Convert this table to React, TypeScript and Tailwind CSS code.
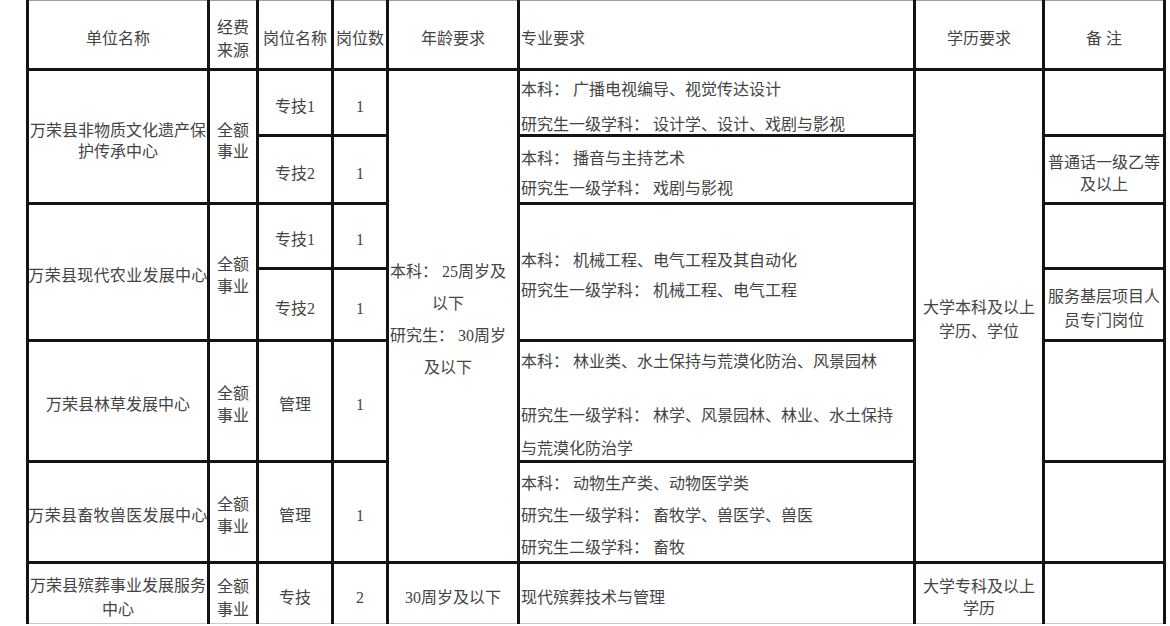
import React from "react";

const base =
  "bg-white flex flex-col items-center justify-center text-center pt-[8px] text-[16px] text-[#444444] font-['Liberation_Serif','Noto_Sans_CJK_SC',serif]";
const left =
  "bg-white flex flex-col items-start justify-center text-left pt-[8px] pl-[1px] text-[16px] text-[#444444] font-['Liberation_Serif','Noto_Sans_CJK_SC',serif] whitespace-nowrap";

function C({ cls, children }: { cls: string; children?: React.ReactNode }) {
  return <div className={`${base} ${cls}`}>{children}</div>;
}
function L({ cls, children }: { cls: string; children?: React.ReactNode }) {
  return <div className={`${left} ${cls}`}>{children}</div>;
}

export default function App() {
  return (
    <div className="w-[1170px] h-[626px] bg-white overflow-hidden">
      <div className="ml-[26px] w-fit bg-[#141414] px-[3px] grid grid-cols-[178px_46px_72px_52px_128px_393px_126px_118px] grid-rows-[68px_63px_65px_62px_69px_118px_98px_60px] gap-[3px]">
        {/* header */}
        <C cls="col-start-1 row-start-1 border-t border-[#a0a0a0]">单位名称</C>
        <C cls="col-start-2 row-start-1 border-t border-[#a0a0a0] leading-[23px] pt-[4px]">
          <span>经费</span>
          <span>来源</span>
        </C>
        <C cls="col-start-3 row-start-1 border-t border-[#a0a0a0] whitespace-nowrap">岗位名称</C>
        <C cls="col-start-4 row-start-1 border-t border-[#a0a0a0] whitespace-nowrap">岗位数</C>
        <C cls="col-start-5 row-start-1 border-t border-[#a0a0a0]">年龄要求</C>
        <L cls="col-start-6 row-start-1 border-t border-[#a0a0a0]">专业要求</L>
        <C cls="col-start-7 row-start-1 border-t border-[#a0a0a0]">学历要求</C>
        <C cls="col-start-8 row-start-1 border-t border-[#a0a0a0] whitespace-pre">备 注</C>

        {/* column 1 */}
        <C cls="col-start-1 row-start-2 row-span-2 leading-[21px]">万荣县非物质文化遗产保护传承中心</C>
        <C cls="col-start-1 row-start-4 row-span-2 whitespace-nowrap">
          <span className="tracking-[0.3px]">万荣县现代农业发展中心</span>
        </C>
        <C cls="col-start-1 row-start-6">万荣县林草发展中心</C>
        <C cls="col-start-1 row-start-7 whitespace-nowrap">
          <span className="tracking-[0.3px]">万荣县畜牧兽医发展中心</span>
        </C>
        <C cls="col-start-1 row-start-8 leading-[24px] border-b border-[#c8c8c8]">万荣县殡葬事业发展服务中心</C>

        {/* column 2 */}
        <C cls="col-start-2 row-start-2 row-span-2 leading-[21px]">
          <span>全额</span>
          <span>事业</span>
        </C>
        <C cls="col-start-2 row-start-4 row-span-2 leading-[22px]">
          <span>全额</span>
          <span>事业</span>
        </C>
        <C cls="col-start-2 row-start-6 leading-[22px]">
          <span>全额</span>
          <span>事业</span>
        </C>
        <C cls="col-start-2 row-start-7 leading-[22px]">
          <span>全额</span>
          <span>事业</span>
        </C>
        <C cls="col-start-2 row-start-8 leading-[23px] border-b border-[#c8c8c8]">
          <span>全额</span>
          <span>事业</span>
        </C>

        {/* column 3 */}
        <C cls="col-start-3 row-start-2">专技1</C>
        <C cls="col-start-3 row-start-3">专技2</C>
        <C cls="col-start-3 row-start-4">专技1</C>
        <C cls="col-start-3 row-start-5">专技2</C>
        <C cls="col-start-3 row-start-6">管理</C>
        <C cls="col-start-3 row-start-7">管理</C>
        <C cls="col-start-3 row-start-8 border-b border-[#c8c8c8]">专技</C>

        {/* column 4 */}
        <C cls="col-start-4 row-start-2">1</C>
        <C cls="col-start-4 row-start-3">1</C>
        <C cls="col-start-4 row-start-4">1</C>
        <C cls="col-start-4 row-start-5">1</C>
        <C cls="col-start-4 row-start-6">1</C>
        <C cls="col-start-4 row-start-7">1</C>
        <C cls="col-start-4 row-start-8 border-b border-[#c8c8c8]">2</C>

        {/* column 5 */}
        <C cls="col-start-5 row-start-2 row-span-6 leading-[32px] pr-[10px] whitespace-nowrap">
          <span>本科： 25周岁及</span>
          <span>以下</span>
          <span>研究生： 30周岁</span>
          <span>及以下</span>
        </C>
        <C cls="col-start-5 row-start-8 whitespace-nowrap border-b border-[#c8c8c8]">30周岁及以下</C>

        {/* column 6 */}
        <L cls="col-start-6 row-start-2 leading-[35px]">
          <span>本科： 广播电视编导、视觉传达设计</span>
          <span>研究生一级学科： 设计学、设计、戏剧与影视</span>
        </L>
        <L cls="col-start-6 row-start-3 leading-[30px]">
          <span>本科： 播音与主持艺术</span>
          <span>研究生一级学科： 戏剧与影视</span>
        </L>
        <L cls="col-start-6 row-start-4 row-span-2 leading-[30px]">
          <span>本科： 机械工程、电气工程及其自动化</span>
          <span>研究生一级学科： 机械工程、电气工程</span>
        </L>
        <L cls="col-start-6 row-start-6 leading-[30px]">
          <span>本科： 林业类、水土保持与荒漠化防治、风景园林</span>
          <span className="mt-[24px]">研究生一级学科： 林学、风景园林、林业、水土保持</span>
          <span className="mt-[3px]">与荒漠化防治学</span>
        </L>
        <L cls="col-start-6 row-start-7 leading-[32px]">
          <span>本科： 动物生产类、动物医学类</span>
          <span>研究生一级学科： 畜牧学、兽医学、兽医</span>
          <span>研究生二级学科： 畜牧</span>
        </L>
        <L cls="col-start-6 row-start-8 border-b border-[#c8c8c8]">现代殡葬技术与管理</L>

        {/* column 7 */}
        <C cls="col-start-7 row-start-2 row-span-6 leading-[24px] whitespace-nowrap">
          <span>大学本科及以上</span>
          <span>学历、学位</span>
        </C>
        <C cls="col-start-7 row-start-8 leading-[22px] whitespace-nowrap border-b border-[#c8c8c8]">
          <span>大学专科及以上</span>
          <span>学历</span>
        </C>

        {/* column 8 */}
        <C cls="col-start-8 row-start-2"></C>
        <C cls="col-start-8 row-start-3 leading-[22px] whitespace-nowrap">
          <span>普通话一级乙等</span>
          <span>及以上</span>
        </C>
        <C cls="col-start-8 row-start-4"></C>
        <C cls="col-start-8 row-start-5 leading-[24px] whitespace-nowrap">
          <span>服务基层项目人</span>
          <span>员专门岗位</span>
        </C>
        <C cls="col-start-8 row-start-6"></C>
        <C cls="col-start-8 row-start-7"></C>
        <C cls="col-start-8 row-start-8 border-b border-[#c8c8c8]"></C>
      </div>
    </div>
  );
}
